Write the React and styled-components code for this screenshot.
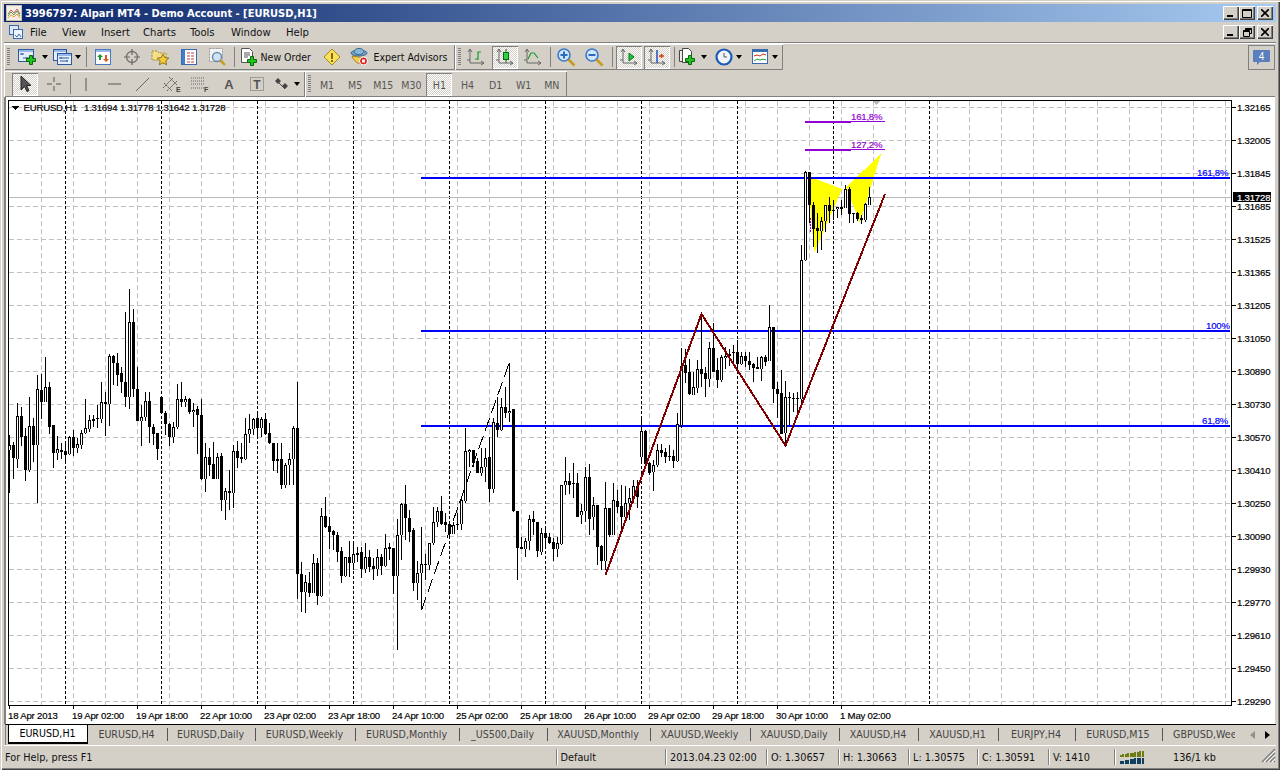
import React from "react";
import styled, { createGlobalStyle } from "styled-components";

const UI = '"DejaVu Sans Condensed","DejaVu Sans",sans-serif';
const CHART = '"Liberation Sans",Arial,sans-serif';

const Global = createGlobalStyle`
  html, body { margin: 0; padding: 0; background: #d4d0c8; overflow: hidden; }
  * { box-sizing: border-box; }
`;

const Win = styled.div`
  width: 1280px; height: 770px; background: #d4d0c8; display: flex; flex-direction: column;
  padding: 4px 4px 3px 4px; font: 10.5px ${UI}; color: #000;
  box-shadow: inset 1px 1px 0 #d4d0c8, inset 2px 2px 0 #fff, inset -1px -1px 0 #404040, inset -2px -2px 0 #808080;
`;
const TitleBar = styled.div`
  height: 18px; flex: none; display: flex; align-items: center; padding: 0 3px 0 2px; gap: 3px;
  background: linear-gradient(90deg, #0a246a, #a6caf0); color: #fff; font: bold 11px ${UI}; white-space: nowrap;
`;
const TitleText = styled.span` flex: 1; `;
const CapGroup = styled.div` display: flex; align-items: center; `;
const CapBtn = styled.div`
  width: 16px; height: 14px; background: #d4d0c8; margin-left: ${p => p.$gap || 0}px; display: flex; align-items: center; justify-content: center;
  box-shadow: inset 1px 1px 0 #fff, inset -1px -1px 0 #404040, inset -2px -2px 0 #808080;
`;
const MenuBar = styled.div` height: 20px; flex: none; display: flex; align-items: center; padding: 0 3px 0 5px; font-size: 11.2px; `;
const MenuIcon = styled.div` width: 21px; flex: none; display: flex; `;
const MenuItem = styled.span` width: ${p => p.$w}px; flex: none; color: #111; `;
const Spacer = styled.div` flex: 1; `;
const ToolArea = styled.div`
  height: 54px; flex: none; border-top: 1px solid #808080; box-shadow: inset 0 1px 0 #fff; padding-top: 1px; display: flex; flex-direction: column; position: relative;
`;
const Row = styled.div` height: 26px; flex: none; display: flex; margin-top: ${p => p.$mt || 0}px; `;
const Band = styled.div`
  display: flex; align-items: center; width: ${p => p.$w}px; flex: none; padding-left: ${p => p.$pl}px;
  box-shadow: inset 1px 1px 0 #fff, inset -1px -1px 0 #808080; height: 100%;
  &>*{flex:none}
`;
const Grip = styled.div`
  width: 3px; height: 18px; margin: 0 ${p => p.$r}px 0 ${p => p.$l}px;
  background: repeating-linear-gradient(180deg, #808080 0 1px, #d4d0c8 1px 2px);
`;
const Sep = styled.div`
  width: ${p => p.$w}px; height: 20px; position: relative;
  &::after { content: ""; position: absolute; left: 50%; top: 0; bottom: 0; width: 1px; background: #808080; }
`;
const Btn = styled.div`
  width: ${p => p.$w || 28.5}px; height: 23px; display: flex; align-items: center; justify-content: ${p => p.$start ? "flex-start" : "center"};
  gap: ${p => p.$gap ?? 0}px; padding-left: ${p => p.$pl || 0}px; color: #111; white-space: nowrap;
`;
const PressedBtn = styled(Btn)`
  background: repeating-conic-gradient(#fff 0 25%, #d4d0c8 0 50%) 0 0 / 2px 2px;
  box-shadow: inset 1px 1px 0 #808080, inset -1px -1px 0 #fff;
  width: ${p => p.$w || 26}px; margin: 0 ${p => p.$m ?? 1.25}px;
`;
const Period = styled(Btn)` width: 28.1px; color: #555; font-size: 10.5px; padding-top: 1px; `;
const PeriodOn = styled(PressedBtn)` width: 26px; margin: 0 1.05px; color: #555; font-size: 10.5px; padding-top: 1px; `;
const Caret = styled.i`
  width: 0; height: 0; border: 3.5px solid transparent; border-top: 4px solid #000; border-bottom: 0; display: block; margin-left: ${p => p.$ml || 3}px;
`;
const Notify = styled.div`
  position: absolute; right: 1px; top: 2px; width: 27px; height: 25px; box-shadow: inset 0 0 0 1px #808080; display: flex; align-items: center; justify-content: center;
`;
const Panel = styled.div`
  height: 628px; flex: none; border-top: 1px solid #808080; border-left: 2px solid #808080; background: #fff; margin-right: 1px; overflow: hidden;
  svg { display: block; }
`;
const Tabs = styled.div`
  height: 21px; flex: none; display: flex; align-items: stretch; padding-left: 2px; position: relative; overflow: hidden; color: #444;
  border-left: 1px solid #808080; margin-left: 1px; border-top: 1px solid #000;
`;
const Tab = styled.div`
  width: ${p => p.$w}px; flex: none; height: 19px; display: flex; align-items: center; justify-content: center; white-space: nowrap; position: relative;
  font-size: 10.6px; padding: 0 3px 1px 0;
  &::after { content: ""; position: absolute; right: 0; top: 3px; height: 13px; width: 1px; background: #555; }
`;
const ActiveTab = styled(Tab)`
  background: #fff; color: #000; border: 1px solid #000; border-top: 0; border-bottom-width: 2px; padding-right: 1px;
  &::after { display: none; }
`;
const ClipTab = styled(Tab)` justify-content: flex-start; padding-left: 10px; overflow: hidden; &::after{display:none;} `;
const TabArrows = styled.div`
  position: absolute; right: 1px; top: 0; width: 40px; height: 19px; background: #d4d0c8; display: flex; align-items: center; justify-content: flex-end; gap: 10px; padding-right: 5px;
`;
const Tri = styled.i`
  width: 0; height: 0; border: 4px solid transparent; border-left: ${p => p.$right ? `5px solid ${p.$c}` : 0}; border-right: ${p => p.$right ? 0 : `5px solid ${p.$c}`}; display: block;
`;
const Status = styled.div`
  height: 22px; flex: none; border-top: 1px solid #fff; display: flex; align-items: center; position: relative; font-size: 10.8px; padding-top: 1px;
`;
const Cell = styled.div`
  width: ${p => p.$w}px; flex: none; height: 16px; display: flex; align-items: center; padding-left: ${p => p.$pl ?? 5}px; white-space: nowrap; color: #111;
  ${p => p.$first ? "" : "box-shadow: inset 1px 0 0 #808080, inset 2px 0 0 #fff;"}
`;
const Bars = styled.div` display: flex; align-items: center; `;
const Kb = styled.span` margin-left: 29px; `;
const Resize = styled.div` position: absolute; right: 0; bottom: 1px; `;
const ChartText = styled.text`
  font: 9.6px ${CHART}; letter-spacing: -0.2px; fill: ${p => p.$c || "#000"}; stroke: ${p => p.$c || "#000"}; stroke-width: 0.18px;
`;

/* ---- small icons ---- */
const I = ({ children, w = 20, h = 20 }) => <svg width={w} height={h} viewBox={`0 0 ${w} ${h}`} style={{ display: "block" }}>{children}</svg>;
const Plus = ({ x, y }) => <path d={`M${x + 3.5} ${y + .5}h3v3h3v3h-3v3h-3v-3h-3v-3h3z`} fill="#22c322" stroke="#0a6a0a" />;
const Axes = () => <path d="M4 2v14h14M4 2l-2 3M4 2l2 3M18 16l-3-2M18 16l-3 2M1 13h3" fill="none" stroke="#666" />;
const Mini = ({ x, y, w, h }) => <g><rect x={x + .5} y={y + .5} width={w} height={h} fill="#e6eefa" stroke="#2c5aa0" /><rect x={x + 1} y={y + 1} width={w - 1} height="2" fill="#9ab8e6" /></g>;

const Ico = {
  newChart: <I w={22} h={18}><Mini x={1} y={1} w={15} h={12} /><path d="M3 6h4M5 5v2M6 10h6M10 9v2" stroke="#2c5aa0" /><Plus x={9} y={7} /></I>,
  profile: <I w={20} h={18}><Mini x={1} y={1} w={13} h={11} /><Mini x={5} y={5} w={14} h={11} /><path d="M7 10h10M9 9v2M15 12v2M8 13h8" stroke="#2c5aa0" /></I>,
  market: <I><rect x="2.5" y="2.5" width="15" height="15" fill="#fff" stroke="#4a78c0" /><rect x="3" y="3" width="14" height="2" fill="#9ab8e6" /><path d="M7 7l3 3H8v3H6v-3H4z" fill="#1a9a2a" /><path d="M13 15l-3-3h2V8h2v4h2z" fill="#e05a20" /></I>,
  nav: <I><circle cx="10" cy="10" r="5.5" fill="none" stroke="#777" strokeWidth="1.4" /><path d="M10 2v6M10 12v6M2 10h6M12 10h6" stroke="#666" strokeWidth="1.2" /></I>,
  folder: <I><path d="M2 4h5l2 2h7v7H2z" fill="#f5e08a" stroke="#a08830" strokeDasharray="2 1" /><path d="M13 7l1.8 3.6 4 .5-3 2.7.8 4-3.6-2-3.6 2 .8-4-3-2.7 4-.5z" fill="#f5cb3a" stroke="#907020" /></I>,
  list: <I><rect x="2.5" y="2.5" width="15" height="15" fill="#fff" stroke="#3a6ab0" /><rect x="3" y="3" width="3" height="14" fill="#3f7fd0" /><path d="M8 6h8M8 9h8M8 12h8M8 15h8" stroke="#c04040" strokeDasharray="3 1" /></I>,
  tester: <I><rect x="2.5" y="1.5" width="13" height="13" fill="#f2f2f2" stroke="#999" strokeDasharray="2 1" /><circle cx="10" cy="10" r="4.5" fill="#cfe2f8" stroke="#6a8aa8" strokeWidth="1.4" /><path d="M13 13l5 5" stroke="#c89a20" strokeWidth="2.4" /></I>,
  order: <I w={20} h={20}><path d="M2.5 1.5h8l3 3v11h-11z" fill="#fff" stroke="#555" /><path d="M5 6h6M5 8h6M5 10h4" stroke="#555" /><Plus x={8} y={9} /></I>,
  alert: <I><path d="M10 2l8 8-8 8-8-8z" fill="#f8e060" stroke="#a88a10" /><rect x="9" y="6" width="2" height="6" fill="#8a6a00" /><rect x="9" y="13" width="2" height="2" fill="#8a6a00" /></I>,
  ea: <I><ellipse cx="10" cy="6" rx="8" ry="3" fill="#6fa0c8" stroke="#3a6a90" /><ellipse cx="10" cy="4.5" rx="4.5" ry="3" fill="#8ab6d8" stroke="#3a6a90" /><path d="M3 9c2 6 7 8 10 8l3-6z" fill="#f0d050" stroke="#a08020" /><circle cx="14.5" cy="14" r="4" fill="#e02020" stroke="#fff" /><rect x="13" y="12.5" width="3" height="3" fill="#fff" /></I>,
  bars: <I><Axes /><path d="M9 12h3V5h3M12 5v8" fill="none" stroke="#1a9a2a" strokeWidth="1.2" /></I>,
  candles: <I><Axes /><path d="M11 2v14" stroke="#0a6a0a" /><rect x="8.5" y="5.5" width="5" height="7" fill="#2fd04a" stroke="#0a6a0a" /></I>,
  line: <I><Axes /><path d="M5 12l3-6h3l4 5" fill="none" stroke="#1a9a2a" strokeWidth="1.2" /></I>,
  zoomIn: <I><circle cx="8" cy="8" r="6" fill="#d2e6fa" stroke="#3a7ac8" strokeWidth="1.6" /><path d="M4.5 8h7M8 4.5v7" stroke="#2a6ab8" strokeWidth="2" /><path d="M12.5 12.5l6 6" stroke="#c89a20" strokeWidth="2.6" /></I>,
  zoomOut: <I><circle cx="8" cy="8" r="6" fill="#d2e6fa" stroke="#3a7ac8" strokeWidth="1.6" /><path d="M4.5 8h7" stroke="#2a6ab8" strokeWidth="2" /><path d="M12.5 12.5l6 6" stroke="#c89a20" strokeWidth="2.6" /></I>,
  scroll: <I><Axes /><path d="M10 6l5 4-5 4z" fill="#1ac03a" stroke="#0a7a1a" /></I>,
  shift: <I><Axes /><path d="M10 3v13" stroke="#2050c0" strokeWidth="1.5" /><path d="M12 9h5M14.5 7v4" stroke="#e04010" strokeWidth="1.5" /></I>,
  template: <I w={20} h={20}><path d="M1.5 3.5h6v11h-6z" fill="#eee" stroke="#444" /><path d="M4.5 1.5h6l3 3v11h-9z" fill="#fff" stroke="#444" /><Plus x={7} y={8} /></I>,
  clock: <I w={18} h={18}><circle cx="9" cy="9" r="7.5" fill="#f2f6fc" stroke="#1a5ab8" strokeWidth="2.2" /><path d="M9 5v4h3" fill="none" stroke="#555" /></I>,
  lines: <I w={18} h={18}><rect x="1.5" y="1.5" width="15" height="14" fill="#fff" stroke="#3a6ab0" /><rect x="2" y="2" width="14" height="2" fill="#3a6ab0" /><path d="M3 8l3-1 3 1 3-2 3 1" fill="none" stroke="#d03020" /><path d="M3 13l3-2 3 1 3-1 3 1" fill="none" stroke="#20a040" /></I>,
  cursor: <I><path d="M6 2v14l3.5-3.5 2.5 5 2-1-2.5-5H16z" fill="#555" stroke="#222" /></I>,
  cross: <I><path d="M10 3v5M10 12v5M3 10h5M12 10h5" stroke="#555" /></I>,
  vline: <I><path d="M10 4v13" stroke="#555" /></I>,
  hline: <I><path d="M3 10h13" stroke="#555" /></I>,
  trend: <I><path d="M3 17L16 4" stroke="#666" /></I>,
  channel: <I w={22}><path d="M2 14L12 4M6 17L16 7M3 9l8 8M8 3l8 8" stroke="#555" strokeDasharray="2 1" /><text x="15" y="18" fontSize="7" fontFamily={CHART} fontWeight="bold" fill="#444">E</text></I>,
  fib: <I w={22}><path d="M2 4h13M2 7h13M2 10h13M2 14h13" stroke="#666" strokeDasharray="1 1" /><text x="15" y="18" fontSize="7" fontFamily={CHART} fontWeight="bold" fill="#444">F</text></I>,
  a: <I><text x="10" y="15" textAnchor="middle" fontSize="13" fontFamily={CHART} fontWeight="bold" fill="#555">A</text></I>,
  t: <I><rect x="3.5" y="3.5" width="13" height="13" fill="none" stroke="#666" strokeDasharray="1 1" /><text x="10" y="15" textAnchor="middle" fontSize="12" fontFamily={CHART} fontWeight="bold" fill="#555">T</text></I>,
  arrows: <I w={18}><path d="M2 7l3-3 3 3-3 3zM9 12l3-3 3 3-3 3z" fill="#444" /><path d="M6 9l6 6" stroke="#444" /></I>,
};

/* ---- candle data, [white?, body top, body bottom, wick top, wick bottom] read from 3x crops ---- */
const G1 = `1 496 510 465 640|0 495 533 485 598|1 408 536 370 565|0 408 470 380 497|0 468 570 445 602|1 438 570 352 575|0 438 494 415 545|1 328 494 285 668|0 330 365 282 418|1 322 365 232 365|0 322 440 306 462|0 436 520 436 565|1 508 520 468 540|0 511 515 490 537|0 514 524 490 550|1 470 522 468 525|0 472 503 450 527|1 493 503 475 518|1 460 494 450 507|1 445 458 357 462|1 420 446 405 455|0 418 422 405 440|0 414 418 375 445|1 367 416 306 430|0 367 371 335 468|1 229 371 223 437|0 229 248 226 315|0 248 284 220 318|0 280 305 262 340|0 305 350 96 382|1 127 352 28 386|0 127 328 88 350|0 328 422 262 423|1 410 422 375 497|1 364 410 337 423|0 364 442 337 490|0 442 461 433 495|0 460 508 460 540|0 352 400 350 402|0 400 433 392 465|0 433 472 430 497|1 440 472 425 490|1 358 440 312 447|0 358 365 306 380|1 358 365 348 380|0 358 395 355 402|1 389 395 370 442|0 388 406 378 522|0 406 596 358 600|1 532 596 490 635|0 532 555 505 588|0 552 596 485 598|1 532 596 520 598|0 528 660 520 692|1 634 660 625 720|0 634 638 570 690|1 514 640 495 685|0 514 533 484 565|0 532 536 490 548|1 463 536 415 540|1 448 463 403 490|1 416 446 415 465|0 415 445 397 475|1 418 445 410 470|0 418 462 400 465|0 460 490 428 492|0 490 542 488 572|0 538 542 488 578|0 538 614 490 626|1 556 616 548 625|1 538 556 520 615|1 445 536 438 615`;
const G2 = `0 235 673 97 748|0 672 725 636 785|1 697 725 675 790|0 700 728 665 740|1 640 728 613 730|0 640 737 625 765|1 498 737 475 740|0 498 530 442 535|0 528 545 502 598|0 543 555 540 600|0 555 605 545 635|0 603 677 590 698|1 622 677 620 680|0 622 638 573 680|1 613 640 583 660|0 609 614 590 635|0 606 656 590 683|1 622 656 580 670|0 622 650 600 665|0 648 656 625 690|1 622 656 598 678|0 622 647 612 675|1 595 647 552 652|0 592 598 578 630|0 595 678 595 732|1 555 678 507 900|1 463 555 460 630|0 463 505 405 570|0 505 545 480 575|0 540 698 535 722|1 670 698 632 750|1 642 670 532 780|1 642 645 612 690|1 580 645 578 660|1 517 580 472 585|1 484 517 470 530|0 484 522 438 524|0 516 524 490 545|0 522 552 512 560|1 525 551 515 552|0 522 526 490 540|1 450 522 448 540|1 304 452 235 460|1 301 307 298 350|0 301 338 300 350|0 334 368 325 370|1 352 368 295 378|1 324 352 295 395|0 322 416 262 455|1 217 418 205 428|0 220 240 140 260|1 172 240 145 243|0 172 188 110 205|1 182 188 38 215|0 178 483 178 485|0 484 593 484 690|0 592 598 560 598|1 574 596 565 622|1 508 574 495 600|0 508 517 483 555|0 517 602 515 622|1 550 605 535 615|0 550 563 532 588|0 562 580 550 583|0 577 596 565 632|1 580 596 560 622|1 406 582 404 585|1 392 406 322 436|0 393 405 370 432|0 399 401 340 445|0 400 500 368 502|1 484 496 462 522|1 382 484 350 515|0 382 506 343 555|1 466 502 442 540|0 466 590 465 645|0 588 632 585 660|1 475 632 397 660|0 475 554 475 560|1 451 554 400 555|0 454 470 420 490|0 468 500 405 550|1 460 500 408 520|1 445 460 415 510`;
const G3 = `1 589 628 570 640|0 589 620 570 655|1 423 500 382 520|0 423 522 420 530|0 520 548 515 555|1 526 545 510 603|1 481 525 462 530|0 481 488 462 500|0 486 500 475 520|0 498 501 465 512|0 498 512 480 535|1 403 512 370 515|1 229 405 175 415|0 226 248 178 278|0 246 313 208 315|1 292 314 245 315|1 238 294 210 310|0 238 252 75 292|0 250 266 230 320|1 175 266 155 290|0 175 245 98 245|0 240 270 205 293|1 202 270 195 275|1 197 203 170 238|0 192 198 178 228|0 186 190 165 220|0 186 222 150 245|1 198 222 185 225|0 198 212 185 232|0 213 224 185 240|0 222 234 220 275|0 232 236 200 238|1 201 236 198 272|0 201 215 195 228|1 112 212 45 213|0 112 298 110 338|0 297 312 275 385|0 310 432 240 432|1 322 428 272 468|1 322 325 305 405|0 323 328 310 365|0 324 328 305 385|1 -90 326 -135 345`;
const G4 = `1 215 480 212 482|0 215 315 215 370|0 315 388 305 440|0 385 393 340 460|1 362 392 350 450|1 315 362 315 395|0 315 333 290 370|0 330 332 300 360|1 322 328 325 355|0 322 326 300 345|1 268 325 255 325|0 268 342 262 370|0 340 342 340 370|0 338 357 335 362|0 355 361 345 372|1 312 361 310 365|1 292 314 262 315`;

const parse = (s, base) => s.split("|").map(r => {
  const [w, a, b, c, d] = r.split(" ").map(Number);
  return { white: !!w, top: Math.round(base + a / 3), bot: Math.round(base + b / 3), hi: Math.round(base + c / 3), lo: Math.round(base + d / 3) };
});
const CANDLES = [...parse(G1, 280), ...parse(G2, 350), ...parse(G3, 290), ...parse(G4, 100)];

const PRICES = ["1.32165", "1.32005", "1.31845", "1.31685", "1.31525", "1.31365", "1.31205", "1.31050", "1.30890", "1.30730", "1.30570", "1.30410", "1.30250", "1.30090", "1.29930", "1.29770", "1.29610", "1.29450", "1.29290"];
const TIMES = ["18 Apr 2013", "19 Apr 02:00", "19 Apr 18:00", "22 Apr 10:00", "23 Apr 02:00", "23 Apr 18:00", "24 Apr 10:00", "25 Apr 02:00", "25 Apr 18:00", "26 Apr 10:00", "29 Apr 02:00", "29 Apr 18:00", "30 Apr 10:00", "1 May 02:00"];

const Chart = () => (
  <svg width="1269" height="627" viewBox="6 97 1269 627" shapeRendering="crispEdges">
    <g stroke="#c0c0c0" strokeDasharray="5 3">
      {PRICES.map((_, i) => <line key={i} x1="9" x2="1231" y1={107.5 + 33 * i} y2={107.5 + 33 * i} />)}
      {Array.from({ length: 38 }, (_, i) => <line key={i} x1={41.5 + 32 * i} x2={41.5 + 32 * i} y1="101" y2="705" />)}
    </g>
    <g stroke="#000" strokeDasharray="3 2">
      {Array.from({ length: 10 }, (_, i) => <line key={i} x1={65.5 + 96 * i} x2={65.5 + 96 * i} y1="101" y2="705" />)}
    </g>
    <line x1="9" x2="1231" y1="197.5" y2="197.5" stroke="#b8b8b8" />
    <polygon points="808,176 842,189 814,253" fill="#ffff00" />
    <polygon points="846,187 881,154 860,223" fill="#ffff00" />
    <rect x="421" y="425" width="809" height="2" fill="#0000ff" />
    <rect x="421" y="330" width="809" height="2" fill="#0000ff" />
    <rect x="421" y="177" width="809" height="2" fill="#0000ff" />
    <path d="M421.5 610L509.5 362" stroke="#000" fill="none" strokeDasharray="14 5" />
    <line x1="810.5" x2="810.5" y1="218" y2="232" stroke="#9400d3" strokeDasharray="2 1" />
    {CANDLES.map((c, i) => {
      const x = 9 + 4 * i;
      return (
        <g key={i}>
          <rect x={x} y={c.hi} width="1" height={Math.max(c.lo - c.hi, 1)} fill="#000" />
          <rect x={x - 1} y={c.top} width="3" height={Math.max(c.bot - c.top, 1)} fill="#000" />
          {c.white && c.bot - c.top > 1 && <rect x={x} y={c.top + 1} width="1" height={c.bot - c.top - 1} fill="#fff" />}
        </g>
      );
    })}
    <polyline points="605.5,575 701.5,314 785.5,445.5 885,194" fill="none" stroke="#800000" strokeWidth="2" />
    <rect x="805" y="121" width="46" height="2" fill="#9400d3" />
    <rect x="851" y="121" width="34" height="1" fill="#9400d3" />
    <rect x="805" y="149" width="46" height="2" fill="#9400d3" />
    <rect x="851" y="149" width="34" height="1" fill="#9400d3" />
    <polygon points="871,100 881,100 876,105" fill="#b8b8b8" />
    <rect x="8.5" y="100.5" width="1223" height="605" fill="none" stroke="#000" />
    {PRICES.map((_, i) => <rect key={i} x="1232" y={107 + 33 * i} width="4" height="1" fill="#000" />)}
    {TIMES.map((_, i) => <rect key={i} x={9 + 64 * i} y="706" width="1" height="3" fill="#000" />)}
    <polygon points="12,106 19,106 15.5,110" fill="#000" />
    <g shapeRendering="auto">
      <ChartText x="23.5" y="111">EURUSD,H1</ChartText>
      <ChartText x="84" y="111">1.31694</ChartText>
      <ChartText x="120" y="111">1.31778</ChartText>
      <ChartText x="156" y="111">1.31642</ChartText>
      <ChartText x="192" y="111">1.31728</ChartText>
      {PRICES.map((p, i) => <ChartText key={p} x="1237" y={110.5 + 33 * i}>{p}</ChartText>)}
      {TIMES.map((t, i) => <ChartText key={t} x={8 + 64 * i} y="718.5">{t}</ChartText>)}
      <ChartText x="851" y="120" $c="#9400d3">161,8%</ChartText>
      <ChartText x="851" y="148" $c="#9400d3">127,2%</ChartText>
      <ChartText x="1197" y="176" $c="#0000ff">161,8%</ChartText>
      <ChartText x="1206" y="329" $c="#0000ff">100%</ChartText>
      <ChartText x="1202" y="424" $c="#0000ff">61,8%</ChartText>
    </g>
    <rect x="1233" y="192" width="38" height="10" fill="#000" />
    <ChartText x="1237" y="200.5" $c="#fff" shapeRendering="auto">1.31728</ChartText>
  </svg>
);

const Min = () => <svg width="8" height="8" viewBox="0 0 8 8"><rect x="0" y="6" width="6" height="2" fill="#000" /></svg>;
const Max = () => <svg width="10" height="9" viewBox="0 0 10 9"><path d="M.5.5h9v8h-9zM0 1.5h10" fill="none" stroke="#000" /></svg>;
const Restore = () => <svg width="9" height="9" viewBox="0 0 9 9"><path d="M2.5 2V.5h6v5H7M.5 2.5h6v6h-6zM0 3.5h7M2 1.5h7" fill="none" stroke="#000" /></svg>;
const Close = () => <svg width="8" height="8" viewBox="0 0 8 8"><path d="M0 0l8 8M8 0L0 8" stroke="#000" strokeWidth="1.6" /></svg>;

const TABS = [["EURUSD,H4", 80], ["EURUSD,Daily", 88], ["EURUSD,Weekly", 100], ["EURUSD,Monthly", 104], ["_US500,Daily", 88], ["XAUUSD,Monthly", 103], ["XAUUSD,Weekly", 100], ["XAUUSD,Daily", 89], ["XAUUSD,H4", 79], ["XAUUSD,H1", 80], ["EURJPY,H4", 77], ["EURUSD,M15", 87]];

export default function App() {
  return (
    <Win>
      <Global />
      <TitleBar>
        <svg width="16" height="16" viewBox="0 0 16 16"><rect x=".5" y=".5" width="15" height="15" fill="#f4eee4" stroke="#c8c0b0" /><path d="M2 9l3-4 3 3 3-4 3 5" fill="none" stroke="#d05a5a" /><path d="M2 11l3-4 3 3 3-4 3 5" fill="none" stroke="#50a860" /><path d="M2 13l3-3 3 2 3-3 3 4" fill="none" stroke="#e8a040" /></svg>
        <TitleText>3996797: Alpari MT4 - Demo Account - [EURUSD,H1]</TitleText>
        <CapGroup><CapBtn><Min /></CapBtn><CapBtn><Max /></CapBtn><CapBtn $gap={2}><Close /></CapBtn></CapGroup>
      </TitleBar>
      <MenuBar>
        <MenuIcon><svg width="14" height="15" viewBox="0 0 14 15"><rect x=".5" y=".5" width="9" height="9" fill="#dce8fa" stroke="#3a6ab0" /><rect x="4.5" y="4.5" width="9" height="9" fill="#eef4fc" stroke="#3a6ab0" /><path d="M6 10l2 2 2-3 2 3" fill="none" stroke="#3a6ab0" /></svg></MenuIcon>
        <MenuItem $w={32}>File</MenuItem><MenuItem $w={39}>View</MenuItem><MenuItem $w={42}>Insert</MenuItem><MenuItem $w={47}>Charts</MenuItem><MenuItem $w={41}>Tools</MenuItem><MenuItem $w={55}>Window</MenuItem><MenuItem $w={40}>Help</MenuItem>
        <Spacer />
        <CapGroup><CapBtn><Min /></CapBtn><CapBtn><Restore /></CapBtn><CapBtn $gap={2}><Close /></CapBtn></CapGroup>
      </MenuBar>
      <ToolArea>
        <Row>
          <Band $w={451} $pl={3}>
            <Grip $l={0} $r={4} />
            <Btn $w={36} $gap={0}>{Ico.newChart}<Caret /></Btn>
            <Btn $w={33}>{Ico.profile}<Caret /></Btn>
            <Sep $w={6} />
            <Btn>{Ico.market}</Btn><Btn>{Ico.nav}</Btn><Btn>{Ico.folder}</Btn><Btn>{Ico.list}</Btn><Btn>{Ico.tester}</Btn>
            <Sep $w={4} />
            <Btn $w={85} $start $pl={3} $gap={2}>{Ico.order}New Order</Btn>
            <Btn $w={23}>{Ico.alert}</Btn>
            <Btn $w={108} $start $pl={5} $gap={5}>{Ico.ea}Expert Advisors</Btn>
          </Band>
          <Band $w={328} $pl={3}>
            <Grip $l={0} $r={1} />
            <Btn>{Ico.bars}</Btn><PressedBtn>{Ico.candles}</PressedBtn><Btn>{Ico.line}</Btn>
            <Sep $w={4} />
            <Btn>{Ico.zoomIn}</Btn><Btn>{Ico.zoomOut}</Btn>
            <Sep $w={6} />
            <PressedBtn>{Ico.scroll}</PressedBtn><PressedBtn>{Ico.shift}</PressedBtn>
            <Sep $w={4} />
            <Btn $w={34}>{Ico.template}<Caret /></Btn><Btn $w={37}>{Ico.clock}<Caret /></Btn><Btn $w={36}>{Ico.lines}<Caret /></Btn>
          </Band>
        </Row>
        <Notify><svg width="17" height="16" viewBox="0 0 17 16"><path d="M1 0h15a1 1 0 0 1 1 1v10a1 1 0 0 1-1 1H7l-3 3v-3H1a1 1 0 0 1-1-1V1a1 1 0 0 1 1-1z" fill="#5a7fbc" /><text x="8.5" y="10" textAnchor="middle" fontSize="10" fontFamily={CHART} fill="#fff">4</text></svg></Notify>
        <Row $mt={1}>
          <Band $w={301} $pl={7}>
            <PressedBtn $m={1.25}>{Ico.cursor}</PressedBtn><Btn>{Ico.cross}</Btn>
            <Sep $w={4} />
            <Btn>{Ico.vline}</Btn><Btn>{Ico.hline}</Btn><Btn>{Ico.trend}</Btn><Btn>{Ico.channel}</Btn><Btn>{Ico.fib}</Btn><Btn>{Ico.a}</Btn><Btn>{Ico.t}</Btn>
            <Btn $w={30}>{Ico.arrows}<Caret /></Btn>
          </Band>
          <Band $w={262} $pl={3}>
            <Grip $l={0} $r={2} />
            <Period>M1</Period><Period>M5</Period><Period>M15</Period><Period>M30</Period><PeriodOn>H1</PeriodOn><Period>H4</Period><Period>D1</Period><Period>W1</Period><Period>MN</Period>
          </Band>
        </Row>
      </ToolArea>
      <Panel><Chart /></Panel>
      <Tabs>
        <ActiveTab $w={80}>EURUSD,H1</ActiveTab>
        {TABS.map(([t, w]) => <Tab key={t} $w={w}>{t}</Tab>)}
        <ClipTab $w={100}>GBPUSD,Weekly</ClipTab>
        <TabArrows><Tri $c="#909090" /><Tri $c="#000" $right /></TabArrows>
      </Tabs>
      <Status>
        <Cell $first $w={551.5} $pl={1}>For Help, press F1</Cell>
        <Cell $w={109.5}>Default</Cell>
        <Cell $w={101}>2013.04.23 02:00</Cell>
        <Cell $w={72}>O: 1.30657</Cell>
        <Cell $w={70}>H: 1.30663</Cell>
        <Cell $w={69}>L: 1.30575</Cell>
        <Cell $w={71}>C: 1.30591</Cell>
        <Cell $w={66}>V: 1410</Cell>
        <Cell $w={147} $pl={6}>
          <Bars>
            <svg width="24" height="13" viewBox="0 0 24 13" shapeRendering="crispEdges">
              {[4, 3, 3, 2, 2, 2, 1, 1, 0, 0].map((t, i) => <rect key={"u" + i} x={i * 2.4} y={t} width="2" height={6 - t} fill="#6b7d10" />)}
              {[3, 3, 2, 2, 1, 1, 0, 0, 0, 0].map((t, i) => <rect key={"d" + i} x={i * 2.4} y={7 + t} width="2" height={6 - t} fill="#0f4060" />)}
            </svg>
            <Kb>136/1 kb</Kb>
          </Bars>
        </Cell>
        <Resize><svg width="16" height="16" viewBox="0 0 16 16"><path d="M15 2L2 15M15 6L6 15M15 10L10 15M15 14L14 15" stroke="#808080" strokeWidth="1.5" /><path d="M15 4L4 15M15 8L8 15M15 12L12 15" stroke="#fff" /></svg></Resize>
      </Status>
    </Win>
  );
}
